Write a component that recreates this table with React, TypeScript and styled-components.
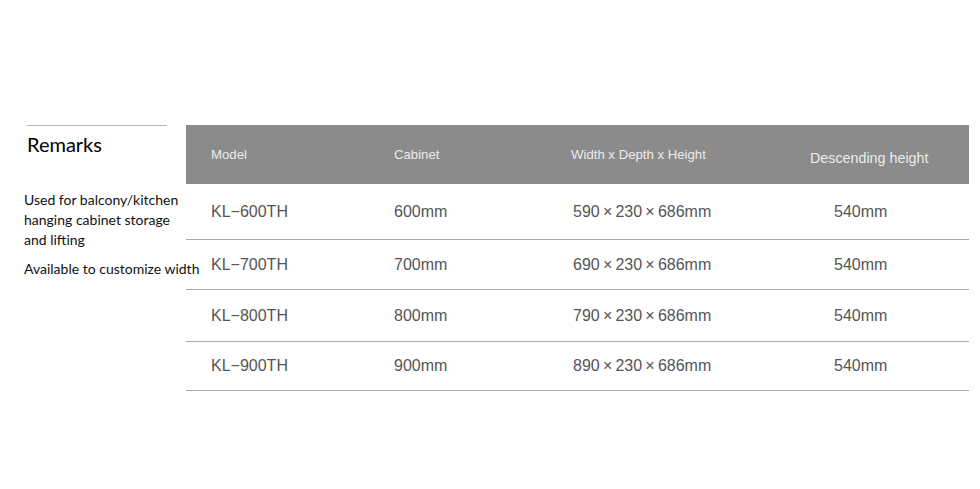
import React from 'react';
import styled, { createGlobalStyle } from 'styled-components';

interface Spec {
  model: string;
  cabinet: string;
  size: string;
  drop: string;
  height: number;
}

const rows: Spec[] = [
  { model: 'KL−600TH', cabinet: '600mm', size: '590\u2009×\u2009230\u2009×\u2009686mm', drop: '540mm', height: 56 },
  { model: 'KL−700TH', cabinet: '700mm', size: '690\u2009×\u2009230\u2009×\u2009686mm', drop: '540mm', height: 50 },
  { model: 'KL−800TH', cabinet: '800mm', size: '790\u2009×\u2009230\u2009×\u2009686mm', drop: '540mm', height: 52 },
  { model: 'KL−900TH', cabinet: '900mm', size: '890\u2009×\u2009230\u2009×\u2009686mm', drop: '540mm', height: 49 },
];

const App: React.FC = () => {
  return (
    <>
      <GlobalStyle />
      <Page>
        <Side>
          <Rule />
          <Title>Remarks</Title>
          <Note>
            Used for balcony/kitchen
            <br />
            hanging cabinet storage
            <br />
            and lifting
          </Note>
          <Note>Available to customize width</Note>
        </Side>

        <Table>
          <Head>
            <HeadCell>Model</HeadCell>
            <HeadCell>Cabinet</HeadCell>
            <HeadCell>Width x Depth x Height</HeadCell>
            <HeadCell $size={14.3} $offset={3}>
              Descending height
            </HeadCell>
          </Head>
          {rows.map((r) => (
            <Row key={r.model} $height={r.height}>
              <Cell>{r.model}</Cell>
              <Cell>{r.cabinet}</Cell>
              <Cell $indent={2}>{r.size}</Cell>
              <Cell $indent={24}>{r.drop}</Cell>
            </Row>
          ))}
        </Table>
      </Page>
    </>
  );
};

// Styles
const GlobalStyle = createGlobalStyle`
  html, body {
    margin: 0;
    background: #ffffff;
  }
  body {
    font-family: 'Liberation Sans', Arial, sans-serif;
  }
`;

const Page = styled.div`
  display: flex;
  align-items: flex-start;
  width: 980px;
  height: 489px;
  padding-top: 125px;
  box-sizing: border-box;
`;

const Side = styled.div`
  width: 186px;
  flex-shrink: 0;
  padding-left: 24px;
  box-sizing: border-box;
  font-family: Lato, 'Open Sans', sans-serif;
  color: #111;
`;

const Rule = styled.div`
  margin-left: 3px;
  width: 140px;
  border-top: 1px solid #b4b4b4;
`;

const Title = styled.h2`
  margin: 6px 0 0 3px;
  font-size: 20px;
  font-weight: 400;
  line-height: 24px;
  color: #000;
`;

const Note = styled.p`
  margin: 0 0 9px;
  font-size: 14px;
  line-height: 20px;
  white-space: nowrap;
  &:first-of-type {
    margin-top: 34px;
  }
`;

const Table = styled.div`
  width: 783px;
  flex-shrink: 0;
`;

const Grid = styled.div`
  display: grid;
  grid-template-columns: 183px 177px 239px 1fr;
  align-items: center;
  padding-left: 25px;
`;

const Head = styled(Grid)`
  height: 59px;
  background: #8b8b8b;
`;

const HeadCell = styled.div<{ $size?: number; $offset?: number }>`
  font-size: ${(p) => p.$size ?? 13.2}px;
  font-weight: 300;
  color: #ececec;
  white-space: nowrap;
  transform: translateY(${(p) => p.$offset ?? 0}px);
`;

const Row = styled(Grid)<{ $height: number }>`
  height: ${(p) => p.$height}px;
  border-bottom: 1px solid #a9a9a9;
  box-sizing: border-box;
`;

const Cell = styled.div<{ $indent?: number }>`
  padding-left: ${(p) => p.$indent ?? 0}px;
  font-size: 16px;
  color: #555;
  white-space: nowrap;
`;

export default App;
